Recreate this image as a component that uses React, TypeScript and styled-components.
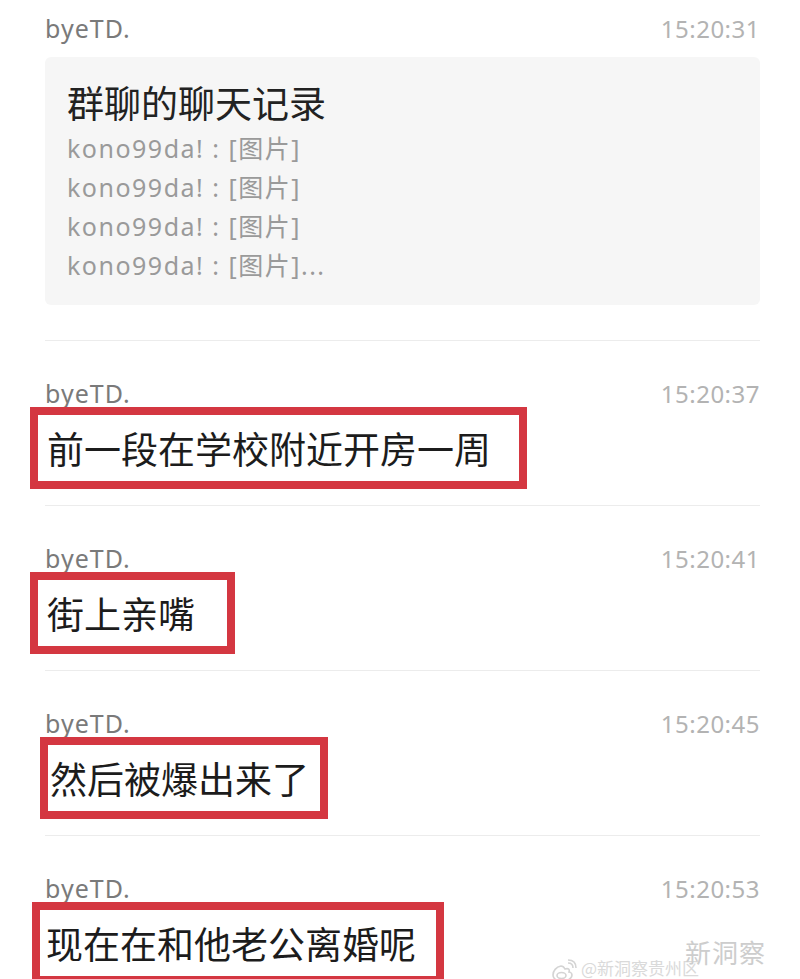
import React from 'react';
import styled, { createGlobalStyle } from 'styled-components';

const GlobalStyle = createGlobalStyle`
  html, body {
    margin: 0;
    padding: 0;
    background: #ffffff;
  }
  body {
    font-family: "Noto Sans", "Noto Sans CJK SC", sans-serif;
  }
`;

const Page = styled.div`
  position: relative;
  width: 800px;
  height: 979px;
  overflow: hidden;
  background: #fff;
  box-sizing: border-box;
  padding: 14px 40px 0 45px;
`;

const Message = styled.section<{ $top: number; $bottom: number }>`
  padding-top: ${(p) => p.$top}px;
  padding-bottom: ${(p) => p.$bottom}px;
  border-bottom: 1px solid #ececec;

  &:last-child {
    border-bottom: none;
  }
`;

const Header = styled.div`
  display: flex;
  justify-content: space-between;
  align-items: center;
  height: 28px;
`;

const Name = styled.span`
  font-size: 25px;
  letter-spacing: 1px;
  color: #7a7a7a;
`;

const Time = styled.span`
  font-size: 24px;
  color: #b3b3b3;
  letter-spacing: 0.5px;
`;

const Card = styled.div`
  margin-top: 15px;
  background: #f6f6f6;
  border-radius: 6px;
  padding: 22px 22px 20px;
`;

const CardTitle = styled.div`
  font-family: "Noto Sans CJK SC", sans-serif;
  font-size: 37px;
  line-height: 46px;
  color: #222;
`;

const CardLines = styled.div`
  margin-top: 4px;
`;

const CardLine = styled.div`
  font-size: 25px;
  line-height: 39px;
  color: #9a9a9a;
  letter-spacing: 1.5px;
`;

const Highlight = styled.div<{ $shift: number; $padLeft: number; $padRight: number }>`
  display: inline-flex;
  align-items: center;
  height: 82px;
  box-sizing: border-box;
  margin-left: ${(p) => p.$shift}px;
  border: 8px solid #d43741;
  padding: 0 ${(p) => p.$padRight}px 0 ${(p) => p.$padLeft}px;
  font-family: "Noto Sans CJK SC", sans-serif;
  font-size: 37px;
  color: #1c1c1c;
  background: #fff;
`;

const Watermark = styled.div`
  position: absolute;
  right: 34px;
  bottom: -4px;
  display: flex;
  align-items: flex-end;
  gap: 4px;
  color: #dadada;
`;

const WatermarkHandle = styled.span`
  font-family: "Noto Sans CJK SC", sans-serif;
  font-size: 17px;
  line-height: 22px;
  padding-bottom: 4px;
`;

const WatermarkBrand = styled.span`
  font-family: "Noto Sans CJK SC", sans-serif;
  font-size: 26px;
  line-height: 34px;
  letter-spacing: 1px;
  margin-left: -18px;
  margin-bottom: 14px;
  color: #cdcdcd;
`;

function WeiboMark() {
  return (
    <svg width="26" height="24" viewBox="0 0 26 24" fill="none" stroke="#d4d4d4" strokeWidth="1.6">
      <path d="M10 7c-5 1-8 5-8 9 0 4 4 6 9 6s10-2 10-6c0-2-2-3-3-3 1-3-1-4-4-3-1-2-2-3-4-3z" />
      <ellipse cx="10.5" cy="16.5" rx="4.5" ry="3" />
      <path d="M17 4c3 0 5 2 5 5" />
      <path d="M17 1c5 0 8 3 8 8" />
    </svg>
  );
}

const highlights = [
  { time: '15:20:37', text: '前一段在学校附近开房一周', shift: -15, padLeft: 9, padRight: 28 },
  { time: '15:20:41', text: '街上亲嘴', shift: -15, padLeft: 9, padRight: 32 },
  { time: '15:20:45', text: '然后被爆出来了', shift: -5, padLeft: 2, padRight: 11 },
  { time: '15:20:53', text: '现在在和他老公离婚呢', shift: -13, padLeft: 6, padRight: 20 },
];

const records = Array.from({ length: 4 }, (_, i) => (i === 3 ? 'kono99da! : [图片]...' : 'kono99da! : [图片]'));

export default function App() {
  return (
    <>
      <GlobalStyle />
      <Page>
        <Message $top={0} $bottom={35}>
          <Header>
            <Name>byeTD.</Name>
            <Time>15:20:31</Time>
          </Header>
          <Card>
            <CardTitle>群聊的聊天记录</CardTitle>
            <CardLines>
              {records.map((line, i) => (
                <CardLine key={i}>{line}</CardLine>
              ))}
            </CardLines>
          </Card>
        </Message>
        {highlights.map((m) => (
          <Message key={m.time} $top={38} $bottom={16}>
            <Header>
              <Name>byeTD.</Name>
              <Time>{m.time}</Time>
            </Header>
            <Highlight $shift={m.shift} $padLeft={m.padLeft} $padRight={m.padRight}>
              {m.text}
            </Highlight>
          </Message>
        ))}
        <Watermark>
          <WeiboMark />
          <WatermarkHandle>@新洞察贵州区</WatermarkHandle>
          <WatermarkBrand>新洞察</WatermarkBrand>
        </Watermark>
      </Page>
    </>
  );
}
